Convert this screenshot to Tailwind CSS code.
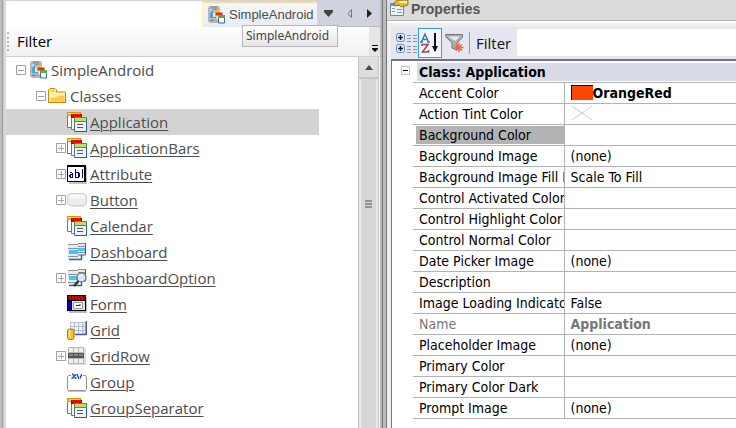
<!DOCTYPE html>
<html lang="en">
<head>
<meta charset="utf-8">
<title>SimpleAndroid</title>
<script src="https://cdn.jsdelivr.net/npm/@tailwindcss/browser@4"></script>
</head>
<body class="flex h-screen overflow-hidden bg-white font-['Open_Sans','Noto_Sans',sans-serif] text-[#4d4d4d]">
<svg class="hidden">
  <symbol id="plus" viewBox="0 0 10 10"><path d="M.5 .5h9v9h-9z" fill="#fff" stroke="#a0a0a0"/><path d="M2 5.500h6M5.500 2v6" stroke="#a8a8a8"/></symbol>
  <symbol id="minus" viewBox="0 0 10 10"><path d="M.5 .5h9v9h-9z" fill="#fff" stroke="#a0a0a0"/><path d="M2 5.500h6" stroke="#a0a0a0"/></symbol>
  <symbol id="app" viewBox="0 0 18 18">
    <path d="M1.500 0h9l1.500 1.500V13l-2 4H2L0 15V2z" fill="#b4b7bc"/><path d="M2 2.500h7V12H2z" fill="#4f9fd8"/><path d="M3 1h6M2 14.500h4" stroke="#7c8086"/><path d="M2 3h3L2 7z" fill="#b5def5"/>
    <path d="M5 5h6v6H5z" fill="#e8e8e8"/><path d="M5 4h7v3H5z" fill="#f7c02d"/><path d="M8 8h6v6H8z" fill="#eee" stroke="#888" stroke-width=".6"/><path d="M7.500 6.500h7v3h-7z" fill="#e02b20"/>
    <path d="M10.500 10.500h6v6.500h-6z" fill="#f5f8fa" stroke="#376da0"/><path d="M10 9h7v3h-7z" fill="#69a640"/>
  </symbol>
  <symbol id="folder" viewBox="0 0 18 16"><path d="M.5 14.500V2L2 .5h5L8.500 2v2h9v10.500z" fill="#fff1a8" stroke="#c18b08"/><path d="M2 3h5" stroke="#e4b637"/><path d="M2.500 13.500V9H8l2-2h6.500v6.500z" fill="#ffc64c"/><path d="M2 9h6l2-2h6" fill="none" stroke="#fff4c2"/><path d="M.5 14.500h17V5" fill="none" stroke="#c08400"/></symbol>
  <symbol id="cls" viewBox="0 0 20 20">
    <path d="M.5 .5h13v15H.5z" fill="#fff" stroke="#777"/><path d="M0 0h14v4H0z" fill="#d99a00"/><path d="M1 1h12v2H1z" fill="#ffd23b"/>
    <path d="M4.500 2.500h10v15h-10z" fill="#f7f7f7" stroke="#777"/><path d="M4 2h11v4H4z" fill="#a80000"/><path d="M5 2h9v3H5z" fill="#e60b0b"/>
    <path d="M7.500 5.500h12v14h-12z" fill="#edf3f6" stroke="#547084"/><path d="M19.500 9v10.500H8" fill="none" stroke="#2460a0"/><path d="M7 5h13v5H7z" fill="#5d902f"/><path d="M8 6h11v3H8z" fill="#bade6e"/><path d="M10 12.500h6M10 15.500h6" stroke="#555"/>
  </symbol>
  <symbol id="attr" viewBox="0 0 20 19"><path d="M2 2h18v17H2z" fill="#c4c4c4"/><path d="M0 0h19v17H0z" fill="#000"/><path d="M1 2h16v14H1z" fill="#fff"/><path d="M3 7h2v1h1v5H3v-1H2v-2h1V9h2V8H3zM4 10v2h1v-2zM8 4h1v3h3v1h1v4h-1v1H8zM9 8v4h2V8zM15 4h1v9h-1z" fill="#00009a" fill-rule="evenodd"/></symbol>
  <linearGradient id="bg" x2="0" y2="1"><stop stop-color="#fff"/><stop offset=".55" stop-color="#ededed"/><stop offset="1" stop-color="#dedede"/></linearGradient>
  <symbol id="btn" viewBox="0 0 20 14"><rect x=".5" y=".5" width="19" height="12" rx="3.500" fill="#ececec" stroke="#cecece"/><path d="M3 2.500h14M2 4.500h16" stroke="#f8f8f8" stroke-width="2"/><path d="M4 13.500h13" stroke="#e5e5e5"/></symbol>
  <symbol id="dash" viewBox="0 0 18 18">
    <path d="M0 1h11v16H0z" fill="#e9e9e9"/><path d="M0 1.500h10M0 5.500h10M0 13.500h10" stroke="#8d9294"/><path d="M1 7h9v4H1z" fill="#49bfff"/><path d="M1 16.500h12.500V11" fill="none" stroke="#2467a0" stroke-width="1.500"/>
    <path d="M10 0h7v12h-7z" fill="#e9e9e9"/><path d="M10 .5h7M10 3.500h7M10 9.500h7" stroke="#8d9294"/><path d="M10 5h7v3h-7z" fill="#49bfff"/><path d="M10 12h7.500V0" fill="none" stroke="#2467a0"/>
  </symbol>
  <symbol id="dasho" viewBox="0 0 19 18"><use href="#dash" width="18" height="18"/><path d="M11 11.500L6 17" stroke="#333" stroke-width="2.500"/><circle cx="13.500" cy="8.500" r="4.500" fill="#ddeaf0" fill-opacity=".9" stroke="#666" stroke-width="1.200"/><path d="M11 8q1-2.500 3.500-2" fill="none" stroke="#fff"/></symbol>
  <symbol id="form" viewBox="0 0 20 18"><path d="M2 2h18v16H2z" fill="#bbb"/><path d="M0 0h19v16H0z" fill="#000"/><path d="M1 1h17v4H1z" fill="#a00000"/><path d="M2 2h1m2 0h1m2 0h1m2 0h1m2 0h1M3 4h1m2 0h1m2 0h1m2 0h1m2 0h1" stroke="#f33"/><path d="M1 6h3v9H1z" fill="#0000c8"/><path d="M5 6h13v9H5z" fill="#e3e3e3"/><path d="M6.500 7.500h9v6h-9z" fill="#fff" stroke="#999"/><path d="M9 10.500h4M13 9v2" stroke="#b00"/></symbol>
  <symbol id="grid" viewBox="0 0 20 19"><path d="M3 1h16v13H3z" fill="#b7bcd1"/><path d="M4 2h3v3H4zm4 0h3v3H8zm4 0h3v3h-3zM4 6h3v3H4zm4 0h3v3H8zm4 0h3v3h-3zm-4 4h3v3H8zm4 0h3v3h-3z" fill="#f3f4fa"/><path d="M16 2h2v3h-2zm0 4h2v3h-2zm0 4h2v3h-2z" fill="#dce0f0"/><path d="M19.500 0v13.500H8" fill="none" stroke="#46568d" stroke-width="1.500"/><rect x=".5" y="8" width="6.500" height="10.500" rx="2" fill="#f1bd24" stroke="#b57b09"/><path d="M2.500 9v8" stroke="#fff0a0" stroke-width="1.500"/></symbol>
  <symbol id="row" viewBox="0 0 18 18"><path d="M1 1h17v17H1z" fill="#ddd"/><path d="M0 0h16v17H0z" fill="#b9b9b9"/><path d="M1 1h4v4H1zm5 0h4v4H6zm5 0h4v4h-4zM1 12h4v4H1zm5 0h4v4H6zm5 0h4v4h-4z" fill="#efefef"/><path d="M0 6h16v5H0z" fill="#555"/><path d="M1 7h4v2H1zm5 0h4v2H6zm5 0h4v2h-4z" fill="#888"/></symbol>
  <symbol id="group" viewBox="0 0 20 19"><path d="M4 2.500H1.500L.5 4v12.500l1 1h17l1-1V4l-1-1.500H16" fill="none" stroke="#929292"/><path d="M1 18.500h18" stroke="#c5c5c5"/><path d="M5 1h1v1h1v1h1V2h1V1M5 6V5h1V4h1V3M8 4v1h1v1M10.500 1v2l1 1v2M14.500 1v2h-1v2h-1" fill="none" stroke="#1546d0" stroke-width="1.100"/></symbol>
</svg>

<div class="w-[6px] shrink-0 border-r-2 border-[#d6d8dd] bg-linear-to-r from-[#bcbcbc] from-40% via-[#858585] via-50% to-[#e8e8e8]"></div>

<section class="flex w-[374px] shrink-0 flex-col">
  <header class="flex h-[27px] shrink-0 border-t border-[#d0d3df]">
    <div class="flex-1 border-r border-[#fff0b0]"></div>
    <button class="flex w-[114px] items-center gap-[3px] border-t-2 border-[#ffd98c] bg-linear-to-b from-[#f6f7fa] to-[#e8ebf2] pl-[5px] font-['Liberation_Sans',sans-serif] text-[13px]">
      <svg class="size-[18px] shrink-0"><use href="#app"/></svg>SimpleAndroid
    </button>
    <nav class="flex w-[63px] items-center justify-between border-b border-[#b8bac2] bg-[#d0d3de] pr-[7px] pl-[7px]">
      <button aria-label="Open tabs"><svg width="9" height="7"><path d="M0 0h9v2L4.500 7 0 2z" fill="#444"/></svg></button>
      <button aria-label="Previous tab"><svg width="6" height="9"><path d="M4.500 .5v8L1 4.500z" fill="none" stroke="#777"/></svg></button>
      <button aria-label="Next tab"><svg width="6" height="9"><path d="M0 0l5 4.500L0 9z" fill="#222"/></svg></button>
    </nav>
  </header>
  <div class="flex h-[30px] shrink-0 items-center border-b border-[#cfcfd3] bg-linear-to-b from-[#fdfdfd] to-[#f1f1f1]">
    <span class="ml-[1px] h-[19px] border-l-2 border-dotted border-[#b8b8b8]"></span>
    <label for="tree-filter" class="ml-[8px] text-[15px] text-black">Filter</label>
    <input id="tree-filter" class="ml-2 min-w-0 flex-1 bg-transparent outline-none">
    <button aria-label="Toolbar options" class="flex h-full w-[11px] items-end justify-center bg-[#e6e6e6] pb-[4px]"><svg width="6" height="7"><path d="M0 .5h6" stroke="#000"/><path d="M0 3h6v1L3 7 0 4z" fill="#000"/></svg></button>
  </div>
  <div class="flex min-h-0 flex-1">
    <ul id="tree" class="w-[313px] text-[15px]"></ul>
    <div class="mr-px ml-auto flex w-[21px] flex-col border-x border-[#c4c4c4] bg-[#e5e5e5] pt-px">
      <button aria-label="Scroll up" class="flex h-[21px] shrink-0 items-center justify-center border-b-2 border-[#c5c5c5] bg-[#dedede]"><svg width="8" height="5"><path d="M4 0l4 5H0z" fill="#4a4a4a"/></svg></button>
      <div class="mx-px flex-1 border-x border-[#eee] bg-[#d7d7d7] pt-[121px]"><div class="mx-auto flex w-[7px] flex-col gap-px"><i class="h-[2px] bg-[#929292]"></i><i class="h-[2px] bg-[#929292]"></i><i class="h-[2px] bg-[#929292]"></i></div></div>
    </div>
  </div>
</section>

<div class="flex w-[7px] shrink-0"><i class="w-[2px] bg-[#b5b8bc]"></i><i class="w-px bg-[#777]"></i><i class="w-[3px] bg-[#bcbcbc]"></i><i class="w-px bg-[#777]"></i></div>

<section class="flex min-w-0 flex-1 flex-col bg-[#efefef] font-['DejaVu_Sans_Condensed','DejaVu_Sans',sans-serif]">
  <h2 class="flex h-[21px] shrink-0 items-start gap-[2px] overflow-hidden border-b border-[#b8b8b8] bg-[#dbdbdb] pl-[2px] font-['Liberation_Sans',sans-serif] text-[14px] leading-[18px] font-bold text-[#555]">
    <svg class="shrink-0" width="20" height="18"><path d="M1.500 3.500h13v12h-13z" fill="#eef3fa" stroke="#71879f"/><path d="M1 4h10v2H1z" fill="#5f94cf"/><path d="M3 8.500h3M3 11.500h3M8 9.500h5M8 12.500h5" stroke="#7d9abb"/><path d="M5 3q2-4 6-3h8v5l-4 1-3 1-2-2-4 1z" fill="#e3bb35" stroke="#7f6416" stroke-width=".8"/><path d="M10 1h8v2h-7z" fill="#fff09a"/></svg>
    Properties
  </h2>
  <div class="h-[2px] shrink-0 bg-white"></div>
  <div class="mt-[4px] ml-[4px] flex h-[32px] shrink-0 items-center bg-[#e5e6f0] pl-[5px]">
    <button aria-label="Categorized" class="mr-px"><svg width="21" height="22"><g fill="#dcecff" stroke="#6b89b1"><rect x=".5" y="1.500" width="8" height="8" rx="2"/><rect x=".5" y="12.500" width="8" height="8" rx="2"/></g><path d="M2 5.500h5M4.500 3v5M2 16.500h5M4.500 14v5" stroke="#123" stroke-width="1.500"/><path d="M11 3.500h4m2 0h4M11 6.500h4m2 0h4M11 9.500h4m2 0h4M11 14.500h4m2 0h4M11 17.500h4m2 0h4M11 20.500h4m2 0h4" stroke="#8997a9"/></svg></button>
    <button aria-label="Sort alphabetically" aria-pressed="true" class="border border-[#3399ff] bg-[#f3f7fd]"><svg width="22" height="28" fill="none"><path d="M2.500 13L6 5l3.500 8M3.500 10.500h5M1 13h3M8 13h3" stroke="#4278b8" stroke-width="1.500"/><path d="M3 17v-1.500H9L3.500 23H9.500v-2" stroke="#a84350" stroke-width="1.600"/><path d="M16 4v18" stroke="#111" stroke-width="2"/><path d="M13 17l3 6 3-6z" fill="#111"/></svg></button>
    <button aria-label="Clear filter" class="ml-[3px]"><svg width="19" height="20"><path d="M.5 1.500h17v3L12 10v7l-5-2v-5L1 4z" fill="#a9acb0" stroke="#777"/><path d="M3 3.500h12L10 8z" fill="#e8eaec"/><path d="M14 10v9M9.500 14.500h9M11 11.500l6 6M17 11.500l-6 6" stroke="#f06b3a" stroke-width="1.500"/></svg></button>
    <span class="ml-[5px] h-[22px] w-px bg-[#999]"></span>
    <label for="prop-filter" class="ml-[6px] w-[41px] font-['Open_Sans',sans-serif] text-[15px] text-[#111]">Filter</label>
    <input id="prop-filter" class="mb-px h-[27px] min-w-0 flex-1 bg-white outline-none">
  </div>
  <div class="ml-[4px] min-h-0 flex-1 overflow-hidden border-t-2 border-l border-[#6f7284] border-l-[#777] bg-white pl-[21px]">
    <table class="w-full table-fixed border-collapse text-[14px] leading-[18px] text-black">
      <colgroup><col class="w-[151px]"><col></colgroup>
      <thead><tr class="h-[21px] border-b border-[#b3b3b3]"><th colspan="2" class="relative p-0 text-left"><button aria-label="Collapse category" class="absolute top-[5px] -left-[12px] flex size-[9px] items-center justify-center border border-[#bfc3cb]"><i class="h-px w-[5px] bg-black"></i></button><div class="mt-px ml-[4px] bg-[#d9dce6] pl-[2px]">Class: Application</div></th></tr></thead>
      <tbody id="props"></tbody>
    </table>
  </div>
</section>

<div role="tooltip" class="absolute top-[25px] left-[242px] flex h-[22px] w-[96px] items-center border border-[#b8b8b8] bg-linear-to-b from-white to-[#e6e6ea] pl-[3px] font-['Noto_Sans',sans-serif] text-[12px] text-[#444]">SimpleAndroid</div>

<script>
// [indent class, expander, icon, icon width, icon height, label]
const nodes = [
  ['pl-[10px]', 'minus', 'app', 18, 18, 'SimpleAndroid'],
  ['pl-[30px]', 'minus', 'folder', 18, 16, 'Classes'],
  ['', '', 'cls', 20, 20, 'Application'],
  ['', 'plus', 'cls', 20, 20, 'ApplicationBars'],
  ['', 'plus', 'attr', 20, 19, 'Attribute'],
  ['', 'plus', 'btn', 20, 14, 'Button'],
  ['', '', 'cls', 20, 20, 'Calendar'],
  ['', '', 'dash', 18, 18, 'Dashboard'],
  ['', 'plus', 'dasho', 19, 18, 'DashboardOption'],
  ['', '', 'form', 20, 18, 'Form'],
  ['', '', 'grid', 20, 19, 'Grid'],
  ['', 'plus', 'row', 18, 18, 'GridRow'],
  ['', '', 'group', 20, 19, 'Group'],
  ['', '', 'cls', 20, 20, 'GroupSeparator']
];
document.getElementById('tree').innerHTML = nodes.map(([pad, ex, icon, w, h, label], i) => `
<li class="flex h-[26px] items-center ${pad || 'pl-[50px]'} ${i === 2 ? 'bg-[#d3d3d3]' : ''}">
<span class="flex w-[11px] shrink-0">${ex ? `<button aria-label="Toggle ${label}"><svg class="block" width="10" height="10"><use href="#${ex}"/></svg></button>` : ''}</span>
<span class="${i > 1 ? 'w-[23px]' : i ? 'ml-px w-[22px]' : 'ml-[3px] w-[21px]'} ${i > 1 && w < 20 ? 'pl-px' : ''} flex shrink-0"><svg class="shrink-0" width="${w}" height="${h}"><use href="#${icon}"/></svg></span>
${i > 1 ? `<a href="#" class="underline decoration-1 underline-offset-2">${label}</a>` : `<span>${label}</span>`}</li>`).join('');

const props = [
  ['Accent Color', '<span class="flex items-center font-bold"><i class="h-[15px] w-[22px] border-t border-l border-black bg-[#ff4500]"></i>OrangeRed</span>'],
  ['Action Tint Color', '<svg class="block" width="22" height="15"><path d="M1 0l20 14M21 0L1 14" stroke="#ccc"/></svg>'],
  ['Background Color', ''], ['Background Image', '(none)'], ['Background Image Fill Mode', 'Scale To Fill'],
  ['Control Activated Color', ''], ['Control Highlight Color', ''], ['Control Normal Color', ''],
  ['Date Picker Image', '(none)'], ['Description', ''], ['Image Loading Indicator', 'False'],
  ['Name', '<b>Application</b>'], ['Placeholder Image', '(none)'], ['Primary Color', ''],
  ['Primary Color Dark', ''], ['Prompt Image', '(none)']
];
document.getElementById('props').innerHTML = props.map(([k, v]) => `
<tr class="h-[21px] border-b border-[#b3b3b3] ${k === 'Name' ? 'text-[#777]' : ''}">
<td class="overflow-hidden border-r border-[#b3b3b3] py-0 pr-0 pl-[3px] whitespace-nowrap"><div class="overflow-hidden pl-[3px] ${k === 'Background Color' ? 'bg-[#b3b3b3]' : ''}">${k}</div></td>
<td class="py-0 pr-0 pl-[6px]">${v}</td></tr>`).join('');
</script>
</body>
</html>
